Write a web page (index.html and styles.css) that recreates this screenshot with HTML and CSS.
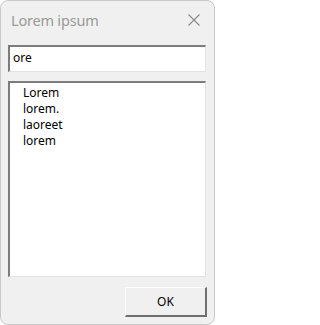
FILE: index.html
```html
<!DOCTYPE html>
<html>
<head>
<meta charset="utf-8">
<link rel="stylesheet" href="styles.css">
</head>
<body>
<div class="window">
  <div class="titlebar">
    <span class="title">Lorem ipsum</span>
    <svg class="close" width="12" height="12" viewBox="0 0 12 12"><path d="M0.5 0.5L11.5 11.5M11.5 0.5L0.5 11.5" stroke="#8a8a8a" stroke-width="1.1" fill="none"/></svg>
  </div>
  <div class="content">
    <div class="field">ore</div>
    <ul class="list">
      <li>Lorem</li>
      <li>lorem.</li>
      <li>laoreet</li>
      <li>lorem</li>
    </ul>
  </div>
  <div class="buttons">
    <button class="btn">OK</button>
  </div>
</div>
</body>
</html>
```
FILE: styles.css
```css
html, body {
  margin: 0;
  padding: 0;
  background: #ffffff;
}
.window {
  width: 215px;
  height: 325px;
  box-sizing: border-box;
  border: 1px solid #c9c9c9;
  border-radius: 8px;
  background: #f0f0f0;
  display: flex;
  flex-direction: column;
  font-family: "Noto Sans", "Liberation Sans", sans-serif;
  overflow: hidden;
}
.titlebar {
  height: 44px;
  display: flex;
  align-items: flex-start;
  justify-content: space-between;
  padding: 0 14px 0 10px;
  box-sizing: border-box;
}
.title {
  font-size: 14.5px;
  color: #9a9a9a;
  line-height: 20px;
  margin-top: 9px;
  letter-spacing: -0.2px;
}
.close {
  margin-top: 13px;
}
.content {
  padding: 0 8px 0 7px;
  display: flex;
  flex-direction: column;
  gap: 9px;
}
.field {
  height: 27px;
  box-sizing: border-box;
  background: #fff;
  border-top: 2px solid #7c7c7c;
  border-left: 2px solid #7c7c7c;
  border-right: 1px solid #e3e3e3;
  border-bottom: 1px solid #e3e3e3;
  font-size: 12px;
  color: #000;
  line-height: 22px;
  padding-left: 3px;
}
.list {
  height: 196px;
  box-sizing: border-box;
  margin: 0;
  list-style: none;
  background: #fff;
  border-top: 2px solid #7c7c7c;
  border-left: 2px solid #7c7c7c;
  border-right: 1px solid #e3e3e3;
  border-bottom: 1px solid #e3e3e3;
  padding: 2px 0 0 13px;
  font-size: 12px;
  line-height: 16px;
  color: #000;
}
.buttons {
  display: flex;
  justify-content: flex-end;
  padding: 10px 7px 0 0;
}
.btn {
  width: 82px;
  height: 30px;
  box-sizing: border-box;
  background: #f0f0f0;
  border-top: 1px solid #ffffff;
  border-left: 1px solid #ffffff;
  border-right: 2px solid #6f6f6f;
  border-bottom: 2px solid #6f6f6f;
  font-family: "Noto Sans", "Liberation Sans", sans-serif;
  font-size: 12px;
  color: #000;
  padding: 0;
}
```
